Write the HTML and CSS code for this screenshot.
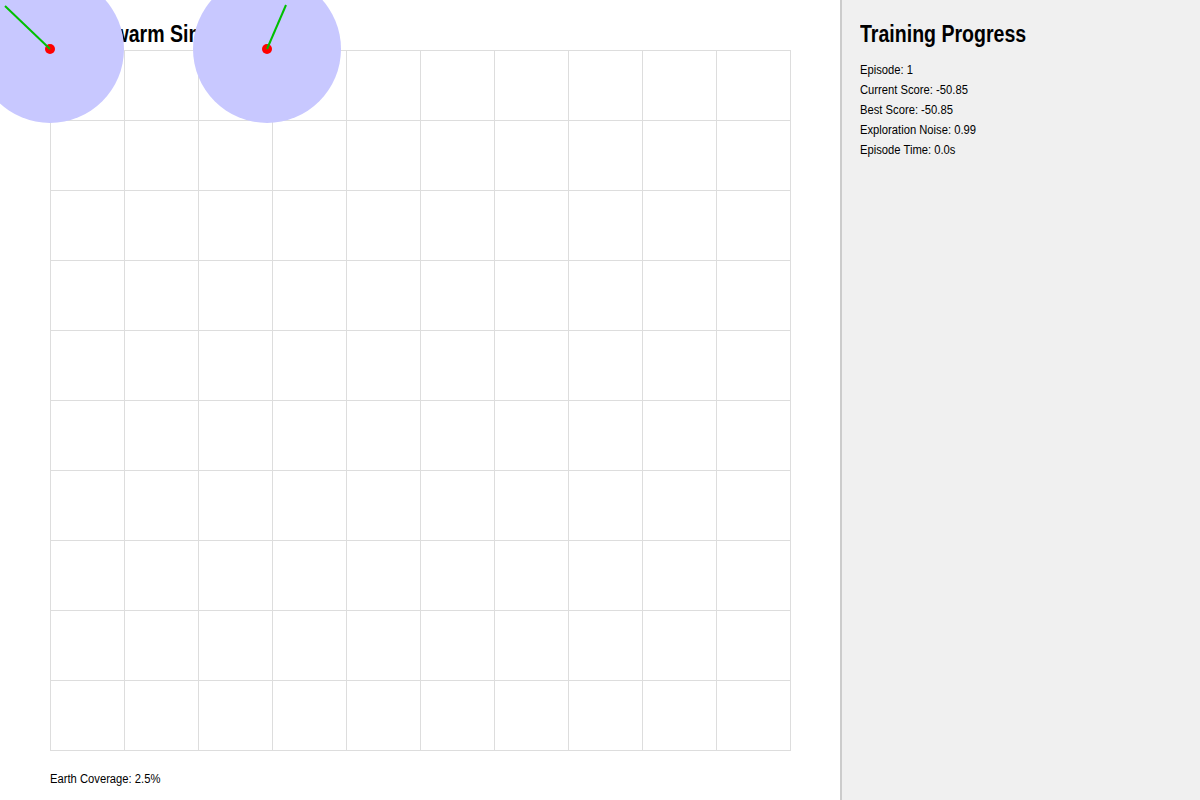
FILE: index.html
```html
<!DOCTYPE html>
<html lang="en">
<head>
<meta charset="utf-8">
<title>Satellite Swarm Simulation</title>
<link rel="stylesheet" href="styles.css">
</head>
<body>
  <main class="sim">
    <h1 class="sim-title">Satellite Swarm Simulation</h1>
    <div class="field">
      <div class="grid"></div>
      <div class="coverage">Earth Coverage: 2.5%</div>
    </div>
    <svg class="drones" width="840" height="800" viewBox="0 0 840 800" xmlns="http://www.w3.org/2000/svg">
      <circle cx="50" cy="49" r="74" fill="#c8c8ff"/>
      <circle cx="50" cy="49" r="5" fill="#ff0000"/>
      <line x1="50" y1="49" x2="5" y2="6" stroke="#00c000" stroke-width="2"/>
      <circle cx="267" cy="49" r="74" fill="#c8c8ff"/>
      <circle cx="267" cy="49" r="5" fill="#ff0000"/>
      <line x1="267" y1="49" x2="286" y2="5" stroke="#00c000" stroke-width="2"/>
    </svg>
  </main>
  <aside class="panel">
    <h2 class="panel-title">Training Progress</h2>
    <div class="stat">Episode: 1</div>
    <div class="stat">Current Score: -50.85</div>
    <div class="stat">Best Score: -50.85</div>
    <div class="stat">Exploration Noise: 0.99</div>
    <div class="stat">Episode Time: 0.0s</div>
  </aside>
</body>
</html>
```

FILE: styles.css
```css
html, body {
  margin: 0;
  padding: 0;
  height: 100%;
}

body {
  display: flex;
  font-family: "Liberation Sans", Arial, sans-serif;
  color: #000;
  background: #fff;
  overflow: hidden;
}

.sim {
  position: relative;
  width: 840px;
  flex: 0 0 840px;
  height: 800px;
  padding: 20px 0 0 20px;
  box-sizing: border-box;
}

.sim-title,
.panel-title {
  margin: 0;
  font-size: 23px;
  line-height: 28px;
  font-weight: bold;
  transform: scaleX(0.85);
  transform-origin: left center;
  white-space: nowrap;
}

.field {
  padding-left: 30px;
  padding-top: 2px;
}

.grid {
  width: 741px;
  height: 701px;
  background-image:
    linear-gradient(to right, #dddddd 1px, transparent 1px),
    linear-gradient(to bottom, #dddddd 1px, transparent 1px);
  background-size: 74px 70px;
}

.coverage {
  margin-top: 18px;
  font-size: 12px;
  line-height: 20px;
  transform: scaleX(0.935);
  transform-origin: left center;
}

.drones {
  position: absolute;
  left: 0;
  top: 0;
}

.panel {
  flex: 1;
  height: 800px;
  box-sizing: border-box;
  background: #f0f0f0;
  border-left: 2px solid #cccccc;
  padding: 20px 18px;
}

.panel-title {
  margin-bottom: 12px;
}

.stat {
  font-size: 12px;
  line-height: 20px;
  transform: scaleX(0.935);
  transform-origin: left center;
}
```
